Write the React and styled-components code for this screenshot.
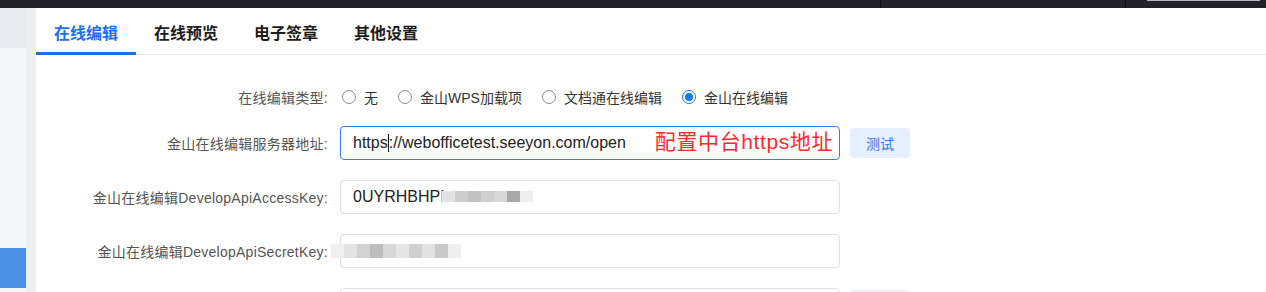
import React from 'react'
import styled, { createGlobalStyle } from 'styled-components'

const GlobalStyle = createGlobalStyle`
  html, body {
    margin: 0;
    padding: 0;
    height: 292px;
    overflow: hidden;
    background: #fff;
    font-family: "Liberation Sans", "Noto Sans CJK SC", Arial, sans-serif;
  }
`;

const Page = styled.div`
  width: 1266px;
  height: 292px;
  display: flex;
  flex-direction: column;
`;

const TopBar = styled.div`
  height: 8px;
  flex-shrink: 0;
  background: #23222b;
  display: flex;
  align-items: flex-start;
  padding-left: 880px;
`;

const BarDivider = styled.div`
  width: 1px;
  height: 8px;
  background: #0c0c10;
  margin-right: ${p => p.gap}px;
`;

const BarStrip = styled.div`
  width: 113px;
  height: 1px;
  background: #b9b9bd;
`;

const Body = styled.div`
  flex: 1;
  display: flex;
`;

const Sidebar = styled.div`
  width: 26px;
  background: #f5f7fa;
  display: flex;
  flex-direction: column;
`;

const SideBlock = styled.div`
  height: 40px;
  background: ${p => p.color};
  margin-top: ${p => p.offset || 0}px;
`;

const Gutter = styled.div`
  width: 10px;
  background: #efefef;
`;

const Main = styled.div`
  flex: 1;
  background: #fff;
`;

const Tabs = styled.div`
  display: flex;
  height: 46px;
  border-bottom: 1px solid #e9e9e9;
`;

const Tab = styled.div`
  padding: 0 18px;
  width: 64px;
  display: flex;
  align-items: center;
  justify-content: center;
  font-size: 16px;
  font-weight: 700;
  color: ${p => (p.active ? '#1b6ff5' : '#1d1d1d')};
  border-bottom: 3px solid ${p => (p.active ? '#1b6ff5' : 'transparent')};
  margin-bottom: -1px;
  box-sizing: content-box;
  padding-top: 3px;
`;

const Form = styled.div`
  padding-top: 25px;
`;

const Row = styled.div`
  display: flex;
  align-items: center;
  height: 34px;
  margin-bottom: ${p => p.gap}px;
`;

const Label = styled.div`
  width: 292px;
  text-align: right;
  font-size: 14px;
  letter-spacing: 0.25px;
  color: #555;
  padding-right: 12px;
  white-space: nowrap;
`;

const Radios = styled.div`
  display: flex;
  align-items: center;
`;

const RadioItem = styled.label`
  display: flex;
  align-items: center;
  font-size: 14px;
  color: #333;
  margin-left: 2px;
  margin-right: 18px;
`;

const Circle = styled.span`
  width: 12px;
  height: 12px;
  border-radius: 50%;
  border: 1px solid ${p => (p.checked ? '#1677ff' : '#8c8c8c')};
  margin-right: 8px;
  display: flex;
  align-items: center;
  justify-content: center;
  &::after {
    content: '';
    width: 8px;
    height: 8px;
    border-radius: 50%;
    background: ${p => (p.checked ? '#1677ff' : 'transparent')};
  }
`;

const Field = styled.div`
  width: 500px;
  height: 34px;
  box-sizing: border-box;
  border: 1px solid ${p => (p.focused ? '#2f7ff0' : '#dcdfe6')};
  border-radius: 4px;
  display: flex;
  align-items: center;
  padding-left: 12px;
  font-size: 16px;
  color: #222;
  position: relative;
`;

const Caret = styled.span`
  display: inline-block;
  width: 1px;
  height: 18px;
  background: #111;
  vertical-align: middle;
`;

const Note = styled.span`
  position: absolute;
  right: 6px;
  top: 0;
  font-size: 21px;
  letter-spacing: 0.6px;
  line-height: 30px;
  color: #ff2a2a;
`;

const Mosaic = styled.div`
  position: absolute;
  left: ${p => p.left}px;
  top: ${p => p.top}px;
  display: flex;
`;

const Cell = styled.span`
  width: ${p => p.w}px;
  height: ${p => p.h}px;
  background: ${p => p.c};
`;

const TestButton = styled.button`
  margin-left: 10px;
  width: 60px;
  height: 30px;
  border: none;
  border-radius: 4px;
  background: #e5effd;
  color: #2b78f0;
  font-size: 14px;
  font-family: inherit;
`;

const keyCells = ['#e2e2e2', '#cdcdcd', '#c2c2c2', '#cfcfcf', '#d8d8d8', '#a8a8a8', '#eeeeee'];
const secretCells = ['#f0f0f0', '#e3e3e3', '#d2d2d2', '#bdbdbd', '#d8d8d8', '#e6e6e6', '#cfcfcf', '#e2e2e2', '#c9c9c9', '#eeeeee'];

const App = () => {
  return (
    <Page>
      <GlobalStyle />
      <TopBar>
        <BarDivider gap={244} />
        <BarDivider gap={21} />
        <BarStrip />
      </TopBar>
      <Body>
        <Sidebar>
          <SideBlock color="#e8ebf0" />
          <SideBlock color="#4a90e2" offset={200} />
        </Sidebar>
        <Gutter />
        <Main>
          <Tabs>
            <Tab active>在线编辑</Tab>
            <Tab>在线预览</Tab>
            <Tab>电子签章</Tab>
            <Tab>其他设置</Tab>
          </Tabs>
          <Form>
            <Row gap={12}>
              <Label>在线编辑类型:</Label>
              <Radios>
                <RadioItem><Circle />无</RadioItem>
                <RadioItem><Circle />金山WPS加载项</RadioItem>
                <RadioItem><Circle />文档通在线编辑</RadioItem>
                <RadioItem><Circle checked />金山在线编辑</RadioItem>
              </Radios>
            </Row>
            <Row gap={20}>
              <Label>金山在线编辑服务器地址:</Label>
              <Field focused>
                <span>https<Caret />://webofficetest.seeyon.com/open</span>
                <Note>配置中台https地址</Note>
              </Field>
              <TestButton>测试</TestButton>
            </Row>
            <Row gap={20}>
              <Label>金山在线编辑DevelopApiAccessKey:</Label>
              <Field>
                <span>0UYRHBHPI</span>
                <Mosaic left={101} top={10}>
                  {keyCells.map((c, i) => <Cell key={i} c={c} w={13} h={11} />)}
                </Mosaic>
              </Field>
            </Row>
            <Row gap={20}>
              <Label>金山在线编辑DevelopApiSecretKey:</Label>
              <Field>
                <Mosaic left={-10} top={9}>
                  {secretCells.map((c, i) => <Cell key={i} c={c} w={13} h={14} />)}
                </Mosaic>
              </Field>
            </Row>
            <Row gap={20}>
              <Label />
              <Field />
              <TestButton />
            </Row>
          </Form>
        </Main>
      </Body>
    </Page>
  )
}

export default App;
